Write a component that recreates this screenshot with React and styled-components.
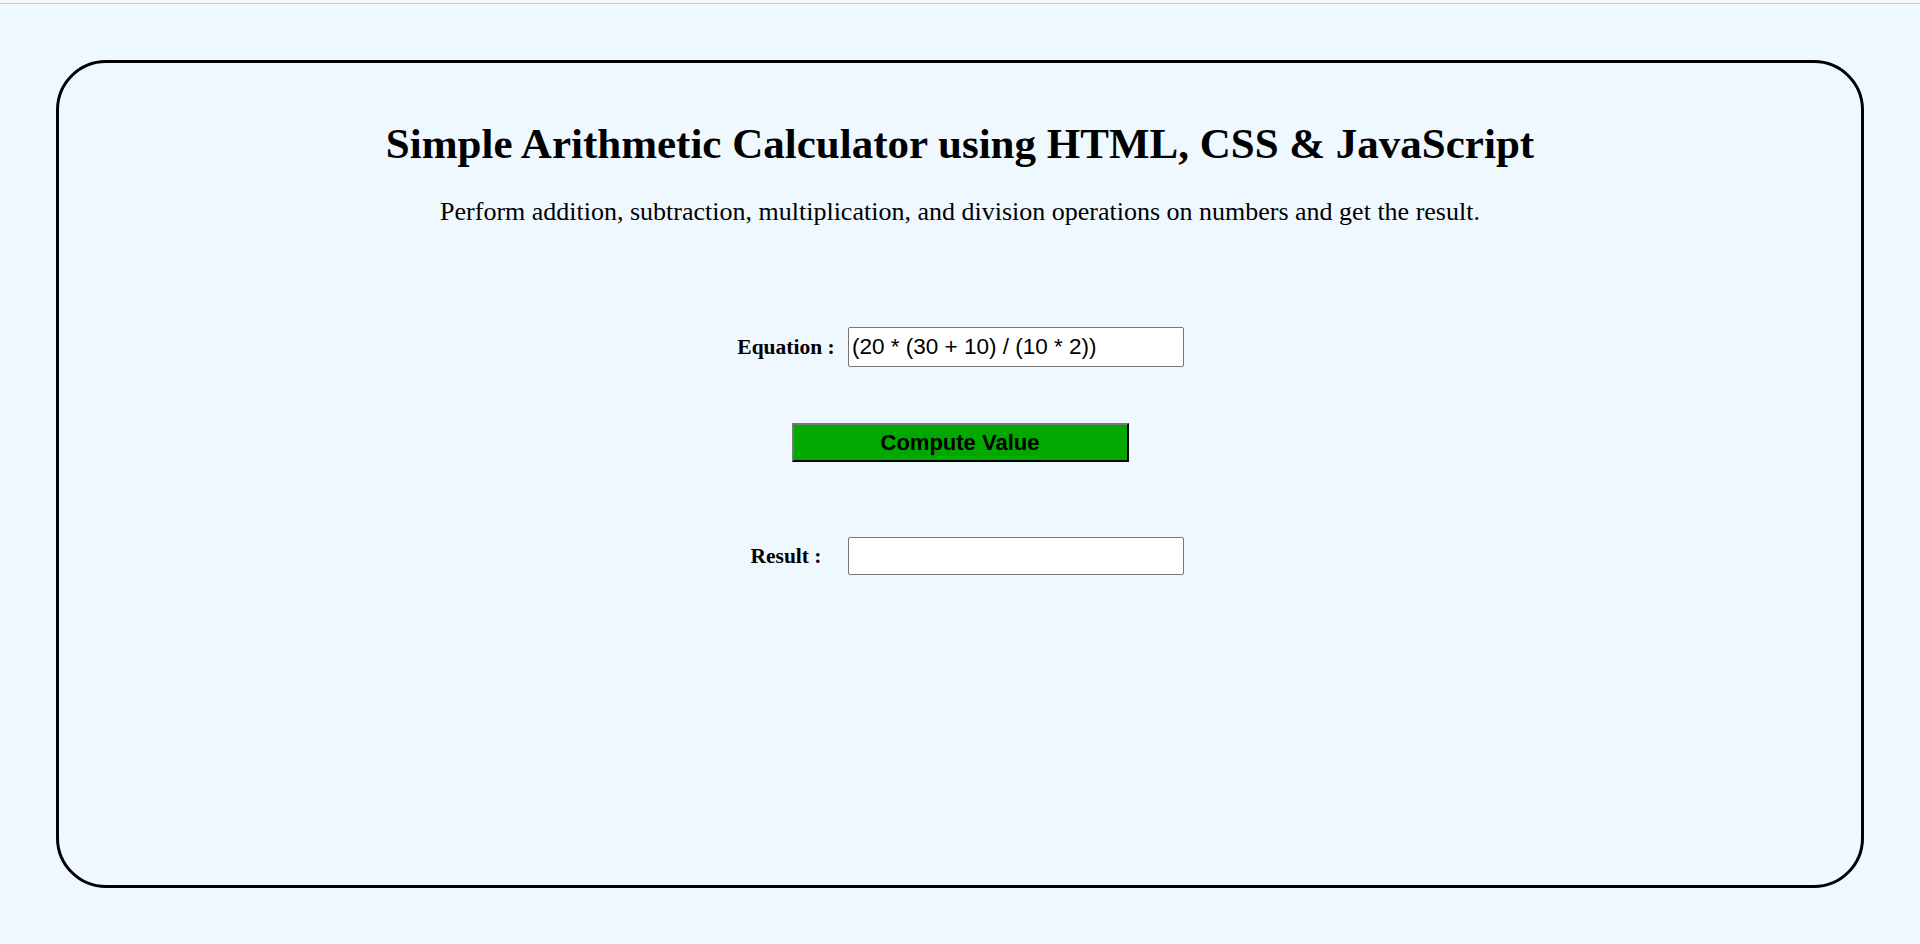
import React, { useState } from "react";
import styled, { createGlobalStyle } from "styled-components";

const GlobalStyle = createGlobalStyle`
  html, body {
    margin: 0;
    padding: 0;
    height: 100%;
    background: #f0f8ff;
  }
  body {
    font-family: "Liberation Serif", "Times New Roman", serif;
    color: #000;
  }
`;

const TopEdge = styled.div`
  height: 3px;
  background: #f7f7f7;
  border-bottom: 1px solid #c9c9c9;
`;

const Card = styled.main`
  box-sizing: border-box;
  height: 828px;
  margin: 56px;
  border: 3px solid #000;
  border-radius: 50px;
  display: flex;
  flex-direction: column;
  align-items: center;
  padding-top: 56px;
`;

const Title = styled.h1`
  margin: 0;
  font-size: 43px;
  line-height: 50px;
  font-weight: bold;
`;

const Subtitle = styled.p`
  margin: 28px 0 0;
  font-size: 26px;
  line-height: 30px;
`;

const Form = styled.div`
  display: flex;
  flex-direction: column;
  align-items: center;
  margin-top: 100px;
`;

const Field = styled.label`
  display: grid;
  grid-template-columns: 112px 336px;
  align-items: center;
`;

const FieldName = styled.span`
  padding-right: 12px;
  text-align: center;
  white-space: nowrap;
  font-size: 21.5px;
  font-weight: bold;
`;

const Input = styled.input`
  box-sizing: border-box;
  width: 336px;
  height: ${(p) => p.$h}px;
  margin: 0;
  padding: 1px 3px;
  border: 1px solid #767676;
  border-radius: 2px;
  background: #fff;
  font-family: "Liberation Sans", Arial, sans-serif;
  font-size: 22.5px;
  color: #000;
  outline: none;
`;

const ComputeButton = styled.button`
  box-sizing: border-box;
  width: 337px;
  height: 39px;
  margin: 56px 0 75px;
  background: #00a800;
  border: 2px outset #767676;
  border-color: #767676 #222 #222 #767676;
  font-family: "Liberation Sans", Arial, sans-serif;
  font-size: 22px;
  font-weight: bold;
  color: #000;
  cursor: pointer;
`;

export default function App() {
  const [equation, setEquation] = useState("(20 * (30 + 10) / (10 * 2))");
  const [result, setResult] = useState("");

  const compute = () => {
    try {
      // eslint-disable-next-line no-new-func
      setResult(String(Function(`return (${equation})`)()));
    } catch (e) {
      setResult("Error");
    }
  };

  return (
    <>
      <GlobalStyle />
      <TopEdge />
      <Card>
        <Title>Simple Arithmetic Calculator using HTML, CSS &amp; JavaScript</Title>
        <Subtitle>
          Perform addition, subtraction, multiplication, and division operations on numbers and get the result.
        </Subtitle>
        <Form>
          <Field>
            <FieldName>Equation :</FieldName>
            <Input $h={40} value={equation} onChange={(e) => setEquation(e.target.value)} />
          </Field>
          <ComputeButton onClick={compute}>Compute Value</ComputeButton>
          <Field>
            <FieldName>Result :</FieldName>
            <Input $h={38} value={result} readOnly />
          </Field>
        </Form>
      </Card>
    </>
  );
}
